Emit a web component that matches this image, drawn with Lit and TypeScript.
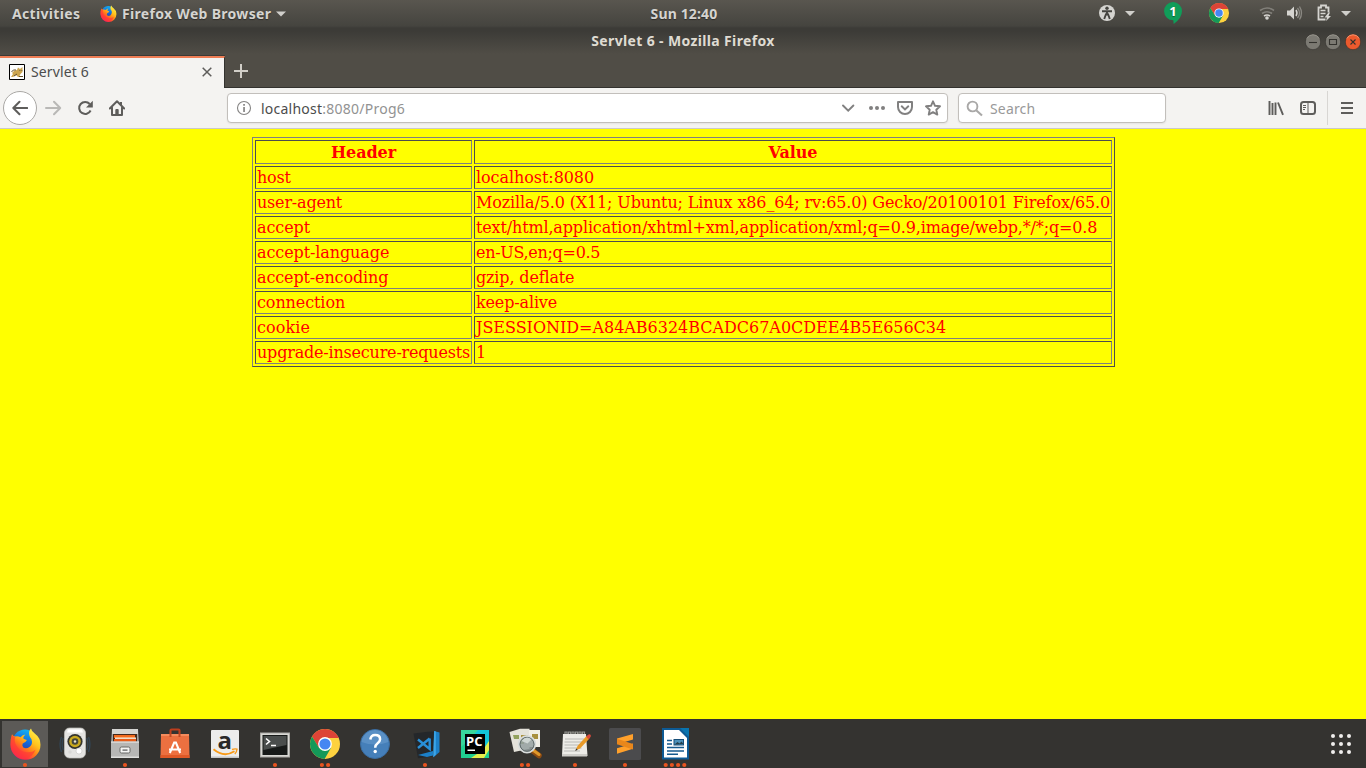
import { LitElement, html, css, svg } from "lit";
import { customElement } from "lit/decorators.js";

// name, value, and the letter tracking (px) of each
const headers: [string, string, number, number][] = [
  ["host", "localhost:8080", -0.2, -0.07],
  ["user-agent", "Mozilla/5.0 (X11; Ubuntu; Linux x86_64; rv:65.0) Gecko/20100101 Firefox/65.0", -0.2, -0.135],
  ["accept", "text/html,application/xhtml+xml,application/xml;q=0.9,image/webp,*/*;q=0.8", -0.1, -0.15],
  ["accept-language", "en-US,en;q=0.5", -0.1, -0.3],
  ["accept-encoding", "gzip, deflate", -0.13, -0.15],
  ["connection", "keep-alive", -0.1, -0.15],
  ["cookie", "JSESSIONID=A84AB6324BCADC67A0CDEE4B5E656C34", 0.1, -0.02],
  ["upgrade-insecure-requests", "1", -0.2, 0],
];

// Firefox globe and flame, in a 32x32 box
const firefoxArt = svg`
  <defs>
    <linearGradient id="fxo" x1="0.85" y1="0.05" x2="0.2" y2="0.95">
      <stop offset="0" stop-color="#fff04a"/><stop offset="0.35" stop-color="#ffc21c"/>
      <stop offset="0.6" stop-color="#ff7a1a"/><stop offset="0.85" stop-color="#ff2a4a"/><stop offset="1" stop-color="#e5147a"/>
    </linearGradient>
    <linearGradient id="fxb" x1="0.6" y1="0" x2="0.3" y2="1">
      <stop offset="0" stop-color="#12b4f5"/><stop offset="0.5" stop-color="#1668d8"/><stop offset="1" stop-color="#3a2a90"/>
    </linearGradient>
  </defs>
  <circle cx="15.5" cy="14" r="12.3" fill="url(#fxb)"/>
  <path fill="url(#fxo)" d="M2.5 6.5 Q3.5 8.5 5.5 8.7 Q8.5 8 11 9.5 Q12.5 7 15.8 6.6 Q13.6 8.5 14 11 Q16 11.6 17.4 12.3 Q16.5 14.3 13.2 15.8 Q12.2 17.7 13.8 19.8 Q17 21.4 20 19.2 Q23.5 16.8 22 11.5 Q20.3 9.5 19.8 7.5 Q18.7 3.5 21.5 .8 Q22 4 25.5 6 Q31 10 31 17 A15 15 0 0 1 1 17 Q.8 11 2.5 6.5Z"/>
  <path fill="#ff3b35" opacity=".65" d="M2.5 7 Q3.5 9 5.5 9 Q4.5 14 7 18 Q10 23.5 17 24.5 Q23 25 26 22 Q23 30 15 31.5 A14.7 14.7 0 0 1 1 17 Q.9 11 2.5 7Z"/>`;

const chromeArt = svg`
  <circle cx="16" cy="16" r="15" fill="#fdd23f"/>
  <path fill="#dd4437" d="M3 8.5 A15 15 0 0 1 29 8.5 L30 10 H16 L10 20Z"/>
  <path fill="#149959" d="M3 8.5 A15 15 0 0 0 15.6 31 L22.2 19.4 L16 22 L9.8 19.5Z"/>
  <circle cx="16" cy="16" r="6.9" fill="#fff"/>
  <circle cx="16" cy="16" r="5.6" fill="#4587f2"/>`;

const arts = {
  firefox: svg`<g transform="translate(9.5 8.8)">${firefoxArt}</g>`,
  rhythmbox: svg`
    <g fill="none" stroke="#315675" stroke-width="1.4" opacity=".5"><path d="M11.500 18Q8.500 25 11.500 33M13.300 19Q11 25 13.300 31M38.500 18Q41.500 25 38.500 33M36.700 19Q39 25 36.700 31"/></g>
    <rect x="14.500" y="9" width="21" height="30" rx="5" fill="#e4e4e2" stroke="#c4c4c0" stroke-width=".7"/>
    <path d="M18 10.500h14l1 3H17z" fill="#fff"/>
    <circle cx="25" cy="22.500" r="7.600" fill="#34352f"/><circle cx="25" cy="22.500" r="5.800" fill="#c9a91f"/>
    <circle cx="25" cy="22.500" r="3.300" fill="#45473d"/><circle cx="25" cy="22.500" r="1.200" fill="#e8e6d5"/>
    <circle cx="29" cy="32" r="3" fill="#fff" stroke="#c5c5c2" stroke-width=".6"/><circle cx="20" cy="33" r="1.700" fill="#d8d8d6"/>`,
  files: svg`
    <path d="M12 10h26l1 15v14H11V25z" fill="#a6a6a4"/><path d="M12 10h26v5H12z" fill="#d5d5d2"/>
    <path d="M13 15h24v8H13z" fill="#46291c"/><path d="M14 16h21v3H14z" fill="#f26a1c"/><path d="M15 18.500h21v1.400H15z" fill="#fff1dd"/><path d="M14 20h22v3H14z" fill="#e95c18"/>
    <path d="M11 22.500h28V39H11z" fill="#b7b7b5"/><path d="M11 22.500h28v1.200H11zM11 37.500h28V39H11z" fill="#dededc"/>
    <rect x="20" y="28" width="10" height="6" rx="1.500" fill="#f4f4f3" stroke="#686866"/><path d="M22.500 30.500h5v1.200h-5z" fill="#555"/>`,
  software: svg`
    <path d="M20.500 18v-6.500q0-1 1-1h7q1 0 1 1V18" fill="none" stroke="#bd3e1d" stroke-width="2.100"/>
    <path d="M11 15h28l.5 24h-29z" fill="#ec7040"/><path d="M11 15h28v2H11z" fill="#f58b5c"/><path d="M10.500 36h29v3h-29z" fill="#df5927"/>
    <path d="M20.500 18v-3M29.500 18v-3" stroke="#c14b25" stroke-width="2"/>
    <path d="M19.800 34 24.200 23.500h1.700L30.200 34M19 30.500h12" fill="none" stroke="#fff" stroke-width="2.100"/>`,
  amazon: svg`
    <rect x="11" y="11" width="28" height="28" rx="1" fill="#ececec"/><path d="M11 37.500h28V39H11z" fill="#c5c5c5"/>
    <text x="24.700" y="29.500" font-family="Open Sans" font-size="24" font-weight="700" text-anchor="middle" fill="#292929">a</text>
    <path d="M13.500 30.300Q24 39 34.500 32.300" fill="none" stroke="#f89a18" stroke-width="1.800"/><path d="M32 30.500q3-1 5-.3q-.3 3-2.200 4.800" fill="none" stroke="#f89a18" stroke-width="1.400"/>`,
  terminal: svg`
    <rect x="10.500" y="14" width="29" height="24" fill="#d8d8d4" stroke="#aaa9a5"/><rect x="12.500" y="16" width="25" height="20" fill="#171a19"/>
    <path d="M13.500 17h23v9l-23 5z" fill="#4a4e4d"/><path d="M16 19.500 19.500 22.500 16 25.500M21 26.500h5" fill="none" stroke="#fff" stroke-width="1.600"/>`,
  chrome: svg`<g transform="translate(9 9)">${chromeArt}</g>`,
  help: svg`
    <circle cx="25" cy="25" r="14.500" fill="#457fb9" stroke="#3a6ca0"/><path d="M11.500 23A13.600 13.600 0 0 1 38.500 23Q25 28 11.500 23" fill="#6c9ed0" opacity=".55"/>
    <path d="M20.300 20.500q.6-4.500 4.800-4.500q5 0 5 4.200q0 2.300-2.700 4.200q-2.200 1.500-2.200 4.300" fill="none" stroke="#fff" stroke-width="2.500"/><circle cx="25.200" cy="32.500" r="1.700" fill="#fff"/>`,
  vscode: svg`
    <path d="M13.500 14.500l14-1.800 7-.2-2 25-14.500 1.800z" fill="#24272a"/>
    <path d="M34 12l5.500 1.500v19.500l-6 5.200z" fill="#1c80c8"/><path d="M34.200 12l-1 26.200 2.600-2.500V12.500z" fill="#3ba5e8"/>
    <path d="M29.700 19.500v10.500L18 20.500M29.700 19.500L18 29" fill="none" stroke="#2990d8" stroke-width="2.400"/><path d="M18 36l15-4v4.500l-6 1.500z" fill="#1c80c8"/>`,
  pycharm: svg`
    <rect x="11" y="11" width="28" height="28" fill="#20cf91"/><path d="M25 11h14v17l-14 4z" fill="#12c5d8"/><path d="M11 11h17l-8 9-9 8z" fill="#38d69b"/><path d="M39 22v9l-5 8H21l12-8z" fill="#e6ee4b"/>
    <rect x="15" y="15" width="20" height="20" fill="#000"/>
    <text x="16" y="26.500" font-family="Open Sans" font-size="13" font-weight="700" fill="#fff">PC</text><path d="M17.500 30.500h7.500v1.500h-7.500z" fill="#fff"/>`,
  viewer: svg`
    <path d="M9.500 13 20 9.800h9.500v20L14 33z" fill="#e4e2da"/><path d="M29 11h11v17H29z" fill="#f0eee6"/>
    <path d="M13 16h6v4h-5zM20 20h4v5h-6z" fill="#92a15e"/><path d="M21 16h7v5h-7zM32 15h6v5h-6z" fill="#a8903f"/>
    <path d="M33 32l6 4.500" stroke="#8d4b12" stroke-width="5.500" stroke-linecap="round"/><path d="M33.500 31.500l5.500 4" stroke="#df9729" stroke-width="3" stroke-linecap="round"/>
    <circle cx="27" cy="25.300" r="8.300" fill="#95a0a0" fill-opacity=".85" stroke="#d8dcdb" stroke-width="1.800"/><circle cx="27" cy="25.300" r="7" fill="none" stroke="#5d6869"/><path d="M21.500 22q5-6 10-1.500l-4 4z" fill="#d0d7d4"/>`,
  notes: svg`
    <path d="M13 15h23l1.500 22H12z" fill="#edece7"/><path d="M12 35h25v2.500H12z" fill="#cfcec9"/>
    <path d="M15 20h19M14.500 23h19M14.500 26h18M14.500 29h17M14 32h16" stroke="#b8b8b4"/>
    <path d="M15 15v-2h2v2M18.500 15v-2h2v2M22 15v-2h2v2M25.500 15v-2h2v2M29 15v-2h2v2M32.500 15v-2h2v2" fill="none" stroke="#94948f" stroke-width="1.200"/>
    <path d="M25.500 31.500l2-4.500L36.500 17l3 2.500-9.500 10z" fill="#e99a28"/><path d="M36 17.500l2.500-2q1.500-.6 2.200.6t-.7 2.700l-1.500 1.500z" fill="#d94a3b"/><path d="M25.200 32l1-2.500 1.500 1.300z" fill="#333"/>`,
  sublime: svg`
    <rect x="9" y="9" width="32" height="32" rx="1.500" fill="#4b4b4d"/>
    <path d="M33 15 17 19.600v5.600L33 20.400zM33 29.800 17 34.800v-5.500L33 24.500z" fill="#ffa02b"/><path d="M17 19.800 33 25v5.600l-16-5.300z" fill="#e9871b"/>`,
  writer: svg`
    <path d="M12 9h19l8 8v23.500H12z" fill="#0d5a94"/><path d="M14 11h15l8 8v19.500H14z" fill="#fff"/><path d="M30 9h9v9z" fill="#0974ae"/>
    <path d="M17 21.500h5M17 25h5M17 28.500h17M17 32h17M17 35.300h11" stroke="#155a8e" stroke-width="1.500"/>
    <rect x="24" y="20.500" width="9.500" height="5.500" fill="#4d91ba" stroke="#174e78"/><path d="M24.500 25.500l3-2.500 2 1.500 2-2 2 2.500z" fill="#263f4b"/>`,
};

const apps: [keyof typeof arts, number][] = [
  ["firefox", 1], ["rhythmbox", 0], ["files", 1], ["software", 0], ["amazon", 0], ["terminal", 1], ["chrome", 2],
  ["help", 0], ["vscode", 1], ["pycharm", 0], ["viewer", 2], ["notes", 1], ["sublime", 1], ["writer", 4],
];

const caret = html`<svg class="caret" viewBox="0 0 10 6"><path d="M0 .5h10L5 5.500z" fill="#d0cfcb"/></svg>`;

@customElement("app-root")
export class AppRoot extends LitElement {
  static styles = css`
    :host { display: flex; flex-direction: column; width: 1366px; height: 768px; overflow: hidden; background: #ff0; font-family: "Noto Sans", sans-serif; }
    * { box-sizing: border-box; }
    svg { display: block; flex: none; }
    span { white-space: nowrap; flex: none; }
    .head { display: flex; flex-direction: column; height: 88px; flex: none; background: linear-gradient(#59564f 0, #45443f 26px, #3c3b37 28px, #3c3b37 31px, #504d46 54px, #504d46 87px); border-bottom: 1px solid #33322e; }
    .top { display: grid; flex: none; grid-template-columns: 600px 168px 331px 267px; height: 27px; align-items: center; color: #d5d4d0; font-size: 14px; font-weight: 700; text-shadow: 0 1px 1px #0006; }
    .side { display: flex; align-items: center; height: 27px; }
    .right { grid-column: 4; }
    .activities { width: 88px; padding-left: 12px; letter-spacing: .33px; }
    .browser { width: 154px; margin-left: 5px; letter-spacing: .31px; }
    .clock { text-align: center; letter-spacing: .15px; }
    .caret { width: 10px; height: 6px; }
    .mark { margin-left: 12px; }
    .i17 { width: 17px; height: 17px; }
    .titlebar { display: grid; flex: none; grid-template-columns: 1fr 400px 1fr; height: 29px; align-items: center; color: #dfdbd2; font-size: 14px; font-weight: 700; text-align: center; }
    .title { padding-bottom: 2px; letter-spacing: .36px; }
    .controls { display: flex; justify-content: flex-end; gap: 4px; padding-right: 5px; }
    .tabs { display: flex; flex: none; height: 31px; }
    .tab { display: flex; align-items: center; width: 225px; height: 32px; padding: 0 12px 2px 9px; background: #f4f3f1; border-top: 2px solid #ef7d54; border-right: 1px solid #33322e; box-shadow: 0 -1px #3b3a36; color: #4c4c4c; font-size: 14px; z-index: 1; }
    .tabname { width: 177px; padding: 0 0 2px 6px; letter-spacing: .12px; }
    .plus { margin: 8px 0 0 9px; }
    .toolbar { display: flex; align-items: center; flex: none; height: 41px; background: #f4f3f1; border-bottom: 1px solid #cbc9c6; padding-left: 3px; color: #4c4c4c; font-size: 14px; }
    .nav { display: flex; align-items: center; flex: none; width: 224px; gap: 15px; }
    .back { display: grid; place-items: center; width: 34px; height: 34px; margin-right: -7px; border: 1px solid #aaa8a5; border-radius: 50%; background: #fff; }
    .field { display: flex; align-items: center; flex: none; height: 30px; background: #fff; border: 1px solid #c2bfbb; border-radius: 4px; box-shadow: 0 1px 2px #0001; }
    .url { width: 721px; padding: 0 5px 0 8px; }
    .address { width: 588px; padding-left: 9px; letter-spacing: .24px; }
    .grey { color: #929292; }
    .acts { display: flex; align-items: center; gap: 11.600px; }
    .search { width: 208px; margin-left: 10px; padding-left: 7px; color: #999; gap: 7px; letter-spacing: .15px; }
    .tools { display: flex; align-items: center; flex: none; height: 34px; margin-left: 102px; }
    .sep { width: 1px; height: 34px; background: #d8d6d3; margin: 0 11px; }
    .page { flex: none; height: 590px; padding: 8px 0 0 252px; color: #f00; font: 16px "DejaVu Serif", serif; }
    table { width: 863px; height: 230px; table-layout: fixed; border: 1px solid; border-color: #808080 #4d4d4d #4d4d4d #808080; border-spacing: 2px; border-collapse: separate; }
    td, th { height: 23px; padding: 0 1px; line-height: 21px; border: 1px solid; border-color: #4d4d4d #808080 #808080 #4d4d4d; white-space: nowrap; text-align: left; }
    th { height: 24px; line-height: 21px; padding-top: 1px; text-align: center; letter-spacing: -.08px; }
    .key { width: 217px; }
    .dock { display: flex; flex: none; height: 49px; background: #343330; }
    .app { display: grid; width: 50px; height: 49px; }
    .app.active { background: linear-gradient(#5c5a57, #5c5a57) 2px 2px / 46px 46px no-repeat; }
    .grid { margin-left: 616px; }
  `;

  render() {
    return html`
      <header class="head">
        <div class="top">
          <div class="side">
            <span class="activities">Activities</span>
            <svg class="mark i17" viewBox="0 0 32 32">${firefoxArt}</svg>
            <span class="browser">Firefox Web Browser</span>${caret}
          </div>
          <span class="clock">Sun 12:40</span>
          <div class="side right">
            <svg width="267" height="27" viewBox="1099 0 267 27">
              <circle cx="1107" cy="13" r="8" fill="#d5d4d0"/><circle cx="1107" cy="8.200" r="1.700" fill="#45443f"/><path d="M1102 11.200h10M1107 11v4.500M1106.200 13.500l-2 5.500M1107.800 13.500l2 5.500" stroke="#45443f" stroke-width="1.900"/>
              <path d="M1125 11h10l-5 5zM1341 11h10l-5 5z" fill="#d0cfcb"/>
              <path d="M1173 2a9 9 0 0 1 9 9q0 7-8.300 13l-.4-3.800A9 9 0 0 1 1173 2z" fill="#109d59"/>
              <text x="1173" y="16" fill="#fff" font-size="13" font-weight="700" text-anchor="middle">1</text>
              <g transform="translate(1208.300 2.300) scale(.67)">${chromeArt}</g>
              <g fill="none" stroke="#817f79" stroke-width="1.600"><path d="M1260 10.500q7-5 14 0M1262 13.500q5-3.500 10 0"/><path d="M1264 16q3-2 6 0" stroke="#d5d4d0"/></g><circle cx="1267" cy="18" r="1.800" fill="#d5d4d0"/>
              <path d="M1287 10.500h3l4-4v13l-4-4h-3z" fill="#d5d4d0"/><path d="M1296 10q2 3 0 6" fill="none" stroke="#d5d4d0" stroke-width="1.500"/><path d="M1297.500 8q4 5 0 10M1299.500 6.500q4 6.500 0 13" fill="none" stroke="#8b8983" stroke-width="1.300"/>
              <path d="M1325 19.500h-7v-12h2.500v-2h5v2h2.500v5" transform="translate(.5)" fill="none" stroke="#d5d4d0" stroke-width="1.800"/><path d="M1320.500 10.500h5M1320.500 13.500h5M1320.500 16.500h3" stroke="#d5d4d0" stroke-width="1.300"/><path d="M1328.500 12.500l-4 5h2.500l-1 3.500 5-5h-2.500l1.500-3.500z" fill="#d5d4d0"/>
            </svg>
          </div>
        </div>
        <div class="titlebar">
          <span></span><span class="title">Servlet 6 - Mozilla Firefox</span>
          <div class="controls">
            ${["min", "max", "close"].map((k) => html`<svg width="16" height="18" viewBox="0 0 16 18">
              <circle cx="8" cy="9" r="7.700" fill=${k === "close" ? "#ec5a2d" : "#7c7a73"} stroke="#302f2b" stroke-width=".6"/>
              <path d="M1.800 5.500A7 7 0 0 1 14.200 5.500" fill="none" stroke=${k === "close" ? "#fa936c" : "#96948c"}/>
              <path d=${k === "min" ? "M4 9.500h8" : k === "max" ? "M4.500 6.500h7v5h-7z" : "M5.500 6.500l5 5M10.500 6.500l-5 5"} fill="none" stroke="#33322e" stroke-width="1.100"/>
            </svg>`)}
          </div>
        </div>
        <div class="tabs">
          <div class="tab">
            <svg width="16" height="16" viewBox="0 0 16 16"><path d="M.5.500h15v15H.5z" fill="#fff" stroke="#000"/><path d="M3 9q2-3 5-3l1-2.500 2 1.500L13.500 3v5l-2 2-1 2h3v1H9l-2-2-3 2H2l2-3z" fill="#cda650"/><path d="M2.500 8Q4 5 7 6M5 12l3-2M10 12.500h4M10.500 6.500h.8M12.500 6.500h.8" stroke="#64512a" fill="none"/></svg>
            <span class="tabname">Servlet 6</span>
            <svg width="10" height="10" viewBox="0 0 10 10"><path d="M.7.700l8.600 8.600M9.300.700L.7 9.300" stroke="#5e5d5b" stroke-width="1.500"/></svg>
          </div>
          <svg class="plus" width="14" height="14" viewBox="0 0 14 14"><path d="M7 0v14M0 7h14" stroke="#d1cec7" stroke-width="2"/></svg>
        </div>
      </header>

      <nav class="toolbar">
        <div class="nav">
          <div class="back"><svg width="16" height="16" viewBox="0 0 16 16"><path d="M15.200 8H1.500M7.500 1.800L1.300 8l6.200 6.200" fill="none" stroke="#5e5d5b" stroke-width="2" stroke-linecap="round" stroke-linejoin="round"/></svg></div>
          <svg width="17" height="16" viewBox="0 0 17 16"><path d="M1 8h14M9 1.800L15.200 8 9 14.200" fill="none" stroke="#b9b8b6" stroke-width="2" stroke-linecap="round" stroke-linejoin="round"/></svg>
          <svg width="17" height="16" viewBox="0 0 17 16"><path d="M12.700 4A6 6 0 1 0 13.600 10.500" fill="none" stroke="#5e5d5b" stroke-width="2"/><path d="M15.800.800V7.500H9z" fill="#5e5d5b"/></svg>
          <svg width="16" height="16" viewBox="0 0 16 16"><path d="M.8 8.500L8 1.300l7.200 7.200M3 7.500V15h10V7.500" fill="none" stroke="#5e5d5b" stroke-width="2" stroke-linecap="round" stroke-linejoin="round"/><path d="M6.300 15v-5q0-1 1-1h1.400q1 0 1 1v5z" fill="#5e5d5b"/><path d="M11 2h2v3h-2z" fill="#5e5d5b"/></svg>
        </div>
        <div class="field url">
          <svg width="16" height="16" viewBox="0 0 16 16"><circle cx="8" cy="8" r="6.500" fill="none" stroke="#858483" stroke-width="1.100"/><path d="M7.200 4h1.700v1.800H7.200zM7.200 7h1.700v5H7.200z" fill="#858483"/></svg>
          <span class="address">localhost<span class="grey">:8080/Prog6</span></span>
          <div class="acts">
            <svg width="16" height="16" viewBox="0 0 16 16"><path d="M3 5.500l5.200 5.200 5.200-5.200" fill="none" stroke="#818080" stroke-width="1.900" stroke-linecap="round"/></svg>
            <svg width="18" height="16" viewBox="0 0 18 16"><g fill="#818080"><circle cx="3" cy="8" r="2"/><circle cx="9" cy="8" r="2"/><circle cx="15" cy="8" r="2"/></g></svg>
            <svg width="16" height="16" viewBox="0 0 16 16"><path d="M1 2h14v5a7 7 0 0 1-14 0z" fill="none" stroke="#818080" stroke-width="2" stroke-linejoin="round"/><path d="M4.700 6.300L8 9.500l3.300-3.200" fill="none" stroke="#818080" stroke-width="1.900" stroke-linecap="round"/></svg>
            <svg width="16" height="16" viewBox="0 0 16 16"><path d="M8 1.300l2 4.500 5 .5-3.700 3.400 1 4.900L8 12.100l-4.300 2.500 1-4.900L1 6.300l5-.5z" fill="none" stroke="#818080" stroke-width="1.900" stroke-linejoin="round"/></svg>
          </div>
        </div>
        <div class="field search">
          <svg width="17" height="17" viewBox="0 0 17 17"><circle cx="6.500" cy="6.500" r="4.900" fill="none" stroke="#a9a8a7" stroke-width="1.900"/><path d="M10.200 10.200L16 15.500" stroke="#a9a8a7" stroke-width="2.100"/></svg>
          <span>Search</span>
        </div>
        <div class="tools">
          <svg width="16" height="16" viewBox="0 0 16 16"><path d="M1.500 1v14M4.500 3v12M7.500 2.500V15M10 2.500l5 12.300" fill="none" stroke="#5e5d5b" stroke-width="1.900"/></svg>
          <svg width="32" height="16" viewBox="-16 0 32 16"><rect x="1" y="2" width="14" height="12" rx="2.500" fill="none" stroke="#5e5d5b" stroke-width="2"/><path d="M8 2v12" stroke="#5e5d5b"/><path d="M3 5.500h3M3 7.500h3M3 9.500h2" stroke="#5e5d5b"/></svg>
          <i class="sep"></i>
          <svg width="16" height="16" viewBox="0 0 16 16"><path d="M2 3h12M2 8h12M2 13h12" stroke="#5e5d5b" stroke-width="2"/></svg>
        </div>
      </nav>

      <main class="page">
        <table>
          <tr><th class="key">Header</th><th>Value</th></tr>
          ${headers.map(([k, v, kt, vt]) => html`<tr><td style="letter-spacing:${kt}px">${k}</td><td style="letter-spacing:${vt}px">${v}</td></tr>`)}
        </table>
      </main>

      <footer class="dock">
        ${apps.map(([name, n]) => html`<div class="app ${name === "firefox" ? "active" : ""}">
          <svg width="50" height="49" viewBox="0 0 50 49">${arts[name]}
            ${Array.from({ length: n }, (_, i) => svg`<circle cx=${25 + (i - (n - 1) / 2) * 6.2} cy="46" r="2.100" fill="#e95420"/>`)}
          </svg></div>`)}
        <svg class="grid" width="50" height="49" viewBox="0 0 50 49"><g fill="#f0efed">${[17, 25, 33].map((x) => [17, 25, 33].map((y) => svg`<circle cx=${x} cy=${y} r="2"/>`))}</g></svg>
      </footer>
    `;
  }
}
